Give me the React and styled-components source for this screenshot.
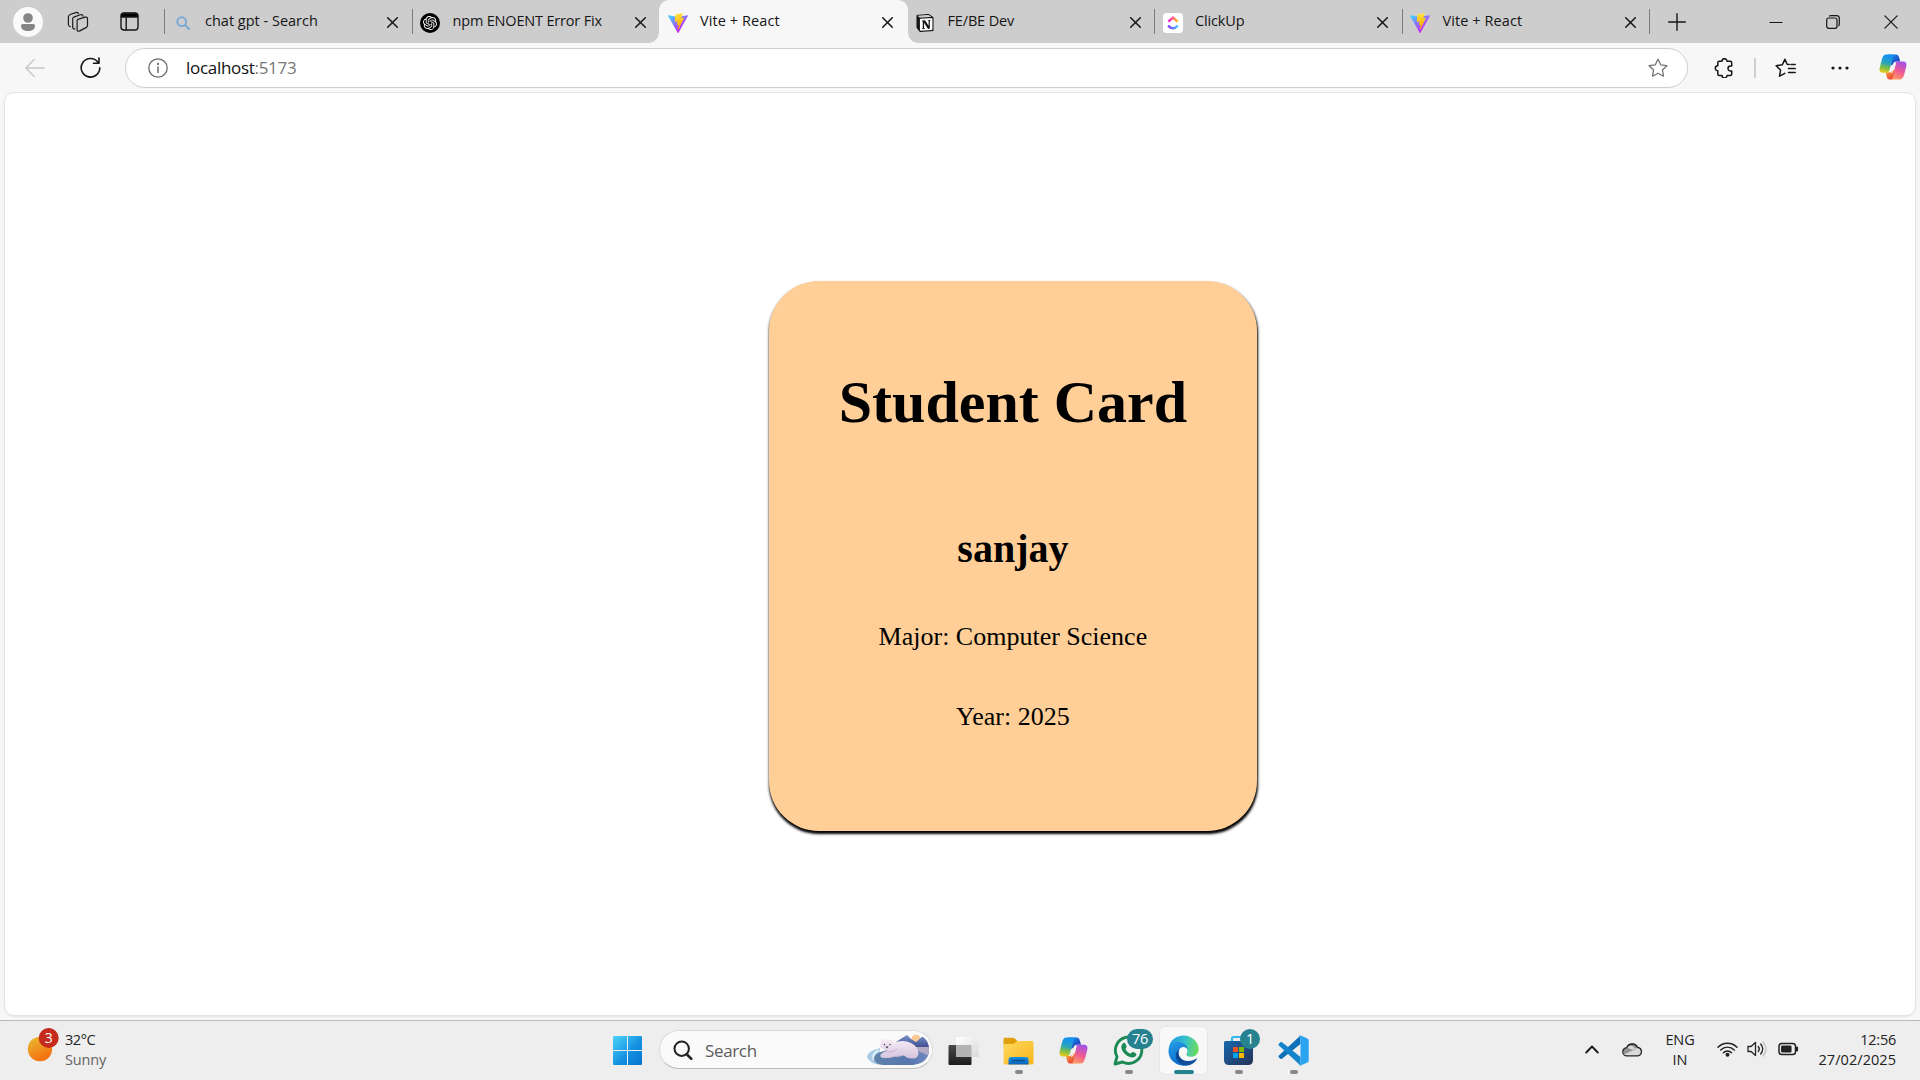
import React from "react";
import styled, { createGlobalStyle, css } from "styled-components";
import { SiOpenai, SiNotion } from "react-icons/si";

const GlobalStyle = createGlobalStyle`
  * { box-sizing: border-box; }
  body { margin: 0; background: #f7f7f7; overflow: hidden; }
  svg { display: block; flex: none; }
`;

const ui = css`
  font-family: "Open Sans", "Noto Sans", sans-serif;
  white-space: nowrap;
`;

const Screen = styled.div`
  width: 1920px;
  height: 1080px;
  display: flex;
  flex-direction: column;
  overflow: hidden;
  background: #f7f7f7;
`;

/* ---------- tab strip ---------- */
const TabStrip = styled.header`
  height: 43px;
  flex: none;
  display: flex;
  background: #cdcdcd;
`;

const Slot = styled.div`
  width: ${(p) => p.$w}px;
  height: 100%;
  padding-left: ${(p) => p.$pl || 0}px;
  flex: none;
  display: flex;
  align-items: center;
  justify-content: center;
`;

const Avatar = styled.div`
  width: 30px;
  height: 30px;
  border-radius: 50%;
  background: #fafafa;
  display: grid;
  place-items: center;
`;

const Divider = styled.i`
  width: 1px;
  height: 25px;
  flex: none;
  background: #7c7c7c;
  visibility: ${(p) => (p.$hidden ? "hidden" : "visible")};
`;

const TabItem = styled.div`
  ${ui}
  position: relative;
  width: 247.5px;
  height: 43px;
  flex: none;
  display: flex;
  align-items: center;
  font-size: 14.5px;
  color: #161616;
  ${(p) =>
    p.$active &&
    css`
      &::before {
        content: "";
        position: absolute;
        inset: 0 -1.5px 0 -0.5px;
        background: #f7f7f7;
        border-radius: 10px 10px 0 0;
      }
      &::after {
        content: "";
        position: absolute;
        left: -10.5px;
        right: -11.5px;
        bottom: 0;
        height: 10px;
        background: radial-gradient(circle at 0 0, transparent 9.5px, #f7f7f7 10px) left / 10px 10px no-repeat,
          radial-gradient(circle at 100% 0, transparent 9.5px, #f7f7f7 10px) right / 10px 10px no-repeat;
      }
    `}
  & > * { z-index: 1; }
`;

const Favicon = styled.div`
  width: 35px;
  flex: none;
  display: flex;
  justify-content: center;
  margin-top: 2px;
`;

const TabTitle = styled.span`
  flex: 1;
  padding-left: 5px;
  padding-bottom: 2px;
  letter-spacing: ${(p) => p.$ls}px;
`;

const TabClose = styled.div`
  width: 38px;
  flex: none;
  display: flex;
  justify-content: center;
  margin-top: 1px;
`;

const Spacer = styled.div`
  flex: 1;
`;

/* ---------- toolbar ---------- */
const Toolbar = styled.div`
  height: 49px;
  flex: none;
  display: flex;
  align-items: center;
  padding-left: 6px;
`;

const AddressBar = styled.div`
  ${ui}
  width: 1563px;
  height: 40px;
  margin: 1px 6px 0 7px;
  flex: none;
  display: flex;
  align-items: center;
  border: 1px solid #cfcfcf;
  border-radius: 20px;
  background: #fff;
  font-size: 17px;
  color: #111;
`;

const Url = styled.span`
  flex: 1;
  padding: 0 0 2px;
  letter-spacing: -0.3px;
  em { font-style: normal; color: #767676; }
`;

const ToolDivider = styled.i`
  width: 2px;
  height: 20px;
  flex: none;
  background: #cfcfcf;
`;

/* ---------- page ---------- */
const Viewport = styled.main`
  width: 1912px;
  height: 924px;
  margin: 0 0 0 4px;
  flex: none;
  border: 1px solid #e4e4e4;
  border-radius: 10px;
  background: #fff;
  padding: 188px 0 0 763.5px;
  box-shadow: 0 1px 2px rgba(0, 0, 0, 0.08);
`;

const Card = styled.section`
  width: 488.8px;
  height: 550px;
  border-radius: 50px;
  background: #ffcf97;
  box-shadow: 0.6px 2.5px 2.5px #000;
  display: flex;
  flex-direction: column;
  align-items: center;
  color: #000;
  font-family: "Liberation Serif", "Times New Roman", serif;
`;

const CardTitle = styled.h1`
  margin: 86px 0 0;
  font-size: 60px;
  line-height: 70px;
`;

const CardName = styled.h2`
  margin: 89px 0 0;
  font-size: 40px;
  line-height: 46px;
`;

const CardLine = styled.p`
  margin: ${(p) => p.$top}px 0 0;
  font-size: 26px;
  line-height: 30px;
`;

/* ---------- taskbar ---------- */
const Taskbar = styled.footer`
  ${ui}
  height: 60px;
  margin-top: auto;
  flex: none;
  display: flex;
  align-items: stretch;
  border-top: 1px solid #b9bbb9;
  background: #eeeeee;
  color: #222;
`;

const Weather = styled.div`
  width: 599px;
  flex: none;
  display: flex;
  padding: 7px 0 0 27px;
  gap: 5px;
`;

const WeatherText = styled.div`
  font-size: 14.5px;
  line-height: 20px;
  padding-top: 2px;
  letter-spacing: -0.45px;
  span { display: block; color: #646464; letter-spacing: -0.15px; }
`;

const SearchBox = styled.div`
  width: 274px;
  height: 39px;
  margin: 9px 3px 0 3px;
  flex: none;
  display: flex;
  align-items: center;
  padding: 0 2px 0 13px;
  border: 1px solid #dadada;
  border-bottom-color: #bdbdbd;
  border-radius: 20px;
  background: #fafafa;
  font-size: 17px;
  color: #5d5d5d;
  span { flex: 1; padding: 1px 0 0 12px; letter-spacing: -0.35px; }
`;

const AppButton = styled.div`
  position: relative;
  width: 49px;
  height: 49px;
  margin: 5px 3px 0;
  flex: none;
  display: flex;
  align-items: center;
  justify-content: center;
  border-radius: 6px;
  border: 1px solid ${(p) => (p.$active ? "#e6e6e6" : "transparent")};
  background: ${(p) => (p.$active ? "#f8f8f8" : "transparent")};
  ${(p) =>
    (p.$open || p.$active) &&
    css`
      &::after {
        content: "";
        position: absolute;
        bottom: 0;
        width: ${p.$active ? 20 : 8}px;
        height: 4px;
        border-radius: 2px;
        background: ${p.$active ? "#27828f" : "#878787"};
      }
    `}
`;

const Badge = styled.span`
  position: absolute;
  left: ${(p) => p.$left}px;
  top: 2px;
  min-width: 20px;
  height: 20px;
  padding: 0 5px;
  border-radius: 10px;
  background: #27828f;
  color: #fff;
  font-size: 14.5px;
  line-height: 20px;
  letter-spacing: -0.4px;
  text-align: center;
`;

const Tray = styled.div`
  display: flex;
  align-items: center;
  margin-left: auto;
  padding: 0 24px 3px 0;
`;

const TrayText = styled.div`
  width: ${(p) => p.$w}px;
  padding-top: 2px;
  text-align: ${(p) => p.$align};
  font-size: 14.5px;
  line-height: 20px;
  letter-spacing: ${(p) => p.$ls}px;
  span { letter-spacing: 0.05px; }
`;

/* ---------- icons ---------- */
const Line = ({ w = 20, h, box, c = "#161616", sw = 1.3, children }) => (
  <svg width={w} height={h || w} viewBox={box || `0 0 ${w} ${h || w}`} fill="none" stroke={c} strokeWidth={sw} strokeLinecap="round" strokeLinejoin="round">
    {children}
  </svg>
);

const PersonIcon = () => (
  <svg width="16" height="20" viewBox="0 0 16 20" fill="#858585">
    <circle cx="8" cy="6" r="4.8" />
    <path d="M2.5 12h11Q15 12 15 13.7C15 17.4 12 19 8 19S1 17.4 1 13.7Q1 12 2.500 12Z" />
  </svg>
);

const WorkspacesIcon = () => (
  <Line w={22} c="#1c1c1c" sw={1.2}>
    <path d="M10.800 8.300 18 6.200Q20.500 5.600 20.500 8v6.300q0 1.700-1.500 2.300l-6.200 3.300q-2.300 1-2.700-1.100V10q0-1.300.7-1.700Z" />
    <path d="M16 5.200q-.5-2-2.500-1.400L7.300 5.900Q5.700 6.500 5.700 8v8.300q.2 1.900 2.200 1.600" />
    <path d="M11.500 2.600q-1-1.600-2.800-1L3.200 3.500Q1.400 4.100 1.400 6v7.800q.2 1.600 1.900 1.800" />
  </Line>
);

const TabActionsIcon = () => (
  <Line w={19} c="#161616" sw={1.4}>
    <rect x="1" y="1" width="17" height="17" rx="3" />
    <path d="M1.500 5V3.500q0-2 2-2h12q2 0 2 2V5Z" fill="#000" />
    <path d="M6.200 6v12" />
  </Line>
);

const BlueSearchIcon = () => (
  <Line w={14} c="#78a9d6" sw={2}>
    <circle cx="5.700" cy="5.700" r="4.400" />
    <path d="m9 9 4 4" />
  </Line>
);

const CrossIcon = ({ s = 11, sw = 1.5 }) => (
  <Line w={s} box="0 0 11 11" c="#161616" sw={sw}>
    <path d="M.7.700 10.300 10.300M10.300.700.7 10.300" />
  </Line>
);

const OpenAiBadge = styled.div`
  width: 20px;
  height: 20px;
  border-radius: 50%;
  background: #000;
  color: #fff;
  display: grid;
  place-items: center;
`;

const NotionHalo = styled.div`
  display: grid;
  place-items: center;
  filter: drop-shadow(0 0 0.6px #fff) drop-shadow(0 0 0.6px #fff);
`;

const NotionPage = styled.div`
  display: grid;
  background: linear-gradient(#fff, #fff) 4px 5px / 12px 11px no-repeat;
`;

const ViteIcon = ({ id }) => (
  <svg width="20" height="20" viewBox="0 0 256 257">
    <defs>
      <linearGradient id={`${id}a`} x1="-.8%" x2="57.6%" y1="7.700%" y2="78.400%">
        <stop offset="0%" stopColor="#41D1FF" />
        <stop offset="100%" stopColor="#BD34FE" />
      </linearGradient>
      <linearGradient id={`${id}b`} x1="43.400%" x2="50.300%" y1="2.200%" y2="89%">
        <stop offset="0%" stopColor="#FFEA83" />
        <stop offset="8.300%" stopColor="#FFDD35" />
        <stop offset="100%" stopColor="#FFA800" />
      </linearGradient>
    </defs>
    <path fill={`url(#${id}a)`} d="M255.153 37.938L134.897 252.976c-2.483 4.440-8.862 4.466-11.382.048L.875 37.958c-2.746-4.814 1.371-10.646 6.827-9.670l120.385 21.517a6.537 6.537 0 0 0 2.322-.004l117.867-21.483c5.438-.991 9.574 4.796 6.877 9.620Z" />
    <path fill={`url(#${id}b)`} d="M185.432.063L96.440 17.501a3.268 3.268 0 0 0-2.634 3.014l-5.474 92.456a3.268 3.268 0 0 0 3.997 3.378l24.777-5.718c2.318-.535 4.413 1.507 3.936 3.838l-7.361 36.047c-.495 2.426 1.782 4.500 4.151 3.780l15.304-4.649c2.372-.720 4.652 1.360 4.150 3.788l-11.698 56.621c-.732 3.542 3.979 5.473 5.943 2.437l1.313-2.028l72.516-144.720c1.215-2.423-.880-5.186-3.540-4.672l-25.505 4.922c-2.396.462-4.435-1.770-3.759-4.114l16.646-57.705c.677-2.350-1.370-4.583-3.769-4.113Z" />
  </svg>
);

const ClickUpIcon = () => (
  <svg width="20" height="20" viewBox="0 0 20 20" fill="none" strokeWidth="2.500">
    <defs>
      <linearGradient id="cuTop" x1="5" x2="15" y1="0" y2="0" gradientUnits="userSpaceOnUse">
        <stop stopColor="#ff02f0" />
        <stop offset="1" stopColor="#ffc800" />
      </linearGradient>
      <linearGradient id="cuBot" x1="5" x2="15" y1="0" y2="0" gradientUnits="userSpaceOnUse">
        <stop stopColor="#8930fd" />
        <stop offset="1" stopColor="#49ccf9" />
      </linearGradient>
    </defs>
    <rect width="20" height="20" rx="3.500" fill="#fff" />
    <path d="m5.400 8.600 4.600-4 4.600 4" stroke="url(#cuTop)" />
    <path d="M5.200 12.700q4.800 5.200 9.600 0" stroke="url(#cuBot)" />
  </svg>
);

const CopilotIcon = ({ id, w = 29 }) => (
  <svg width={w} height={(w * 27) / 29} viewBox="0 0 29 27">
    <defs>
      <linearGradient id={`${id}l`} x1="10" y1="1" x2="6" y2="20" gradientUnits="userSpaceOnUse">
        <stop offset=".1" stopColor="#1592ed" />
        <stop offset=".45" stopColor="#2aa5b8" />
        <stop offset=".7" stopColor="#7bbd48" />
        <stop offset="1" stopColor="#f8cc14" />
      </linearGradient>
      <linearGradient id={`${id}r`} x1="24" y1="8" x2="16" y2="27" gradientUnits="userSpaceOnUse">
        <stop stopColor="#a252e8" />
        <stop offset=".5" stopColor="#ef5a93" />
        <stop offset="1" stopColor="#ffa35c" />
      </linearGradient>
      <linearGradient id={`${id}t`} x1="13" y1="0" x2="21" y2="8" gradientUnits="userSpaceOnUse">
        <stop stopColor="#1a8de8" />
        <stop offset="1" stopColor="#1e3fc0" />
      </linearGradient>
      <linearGradient id={`${id}b`} x1="8" y1="18" x2="14" y2="26" gradientUnits="userSpaceOnUse">
        <stop stopColor="#f9a032" />
        <stop offset="1" stopColor="#e83e3e" />
      </linearGradient>
    </defs>
    <path fill={`url(#${id}t)`} d="M9 .500h8.500c2 0 2.800 1.200 3.300 3l1.200 4.300h-4c-2 0-3 1-3.600 3L12 12Z" />
    <path fill={`url(#${id}b)`} d="M7 19h3.500c2 0 2.800-1.200 3.300-3l3.400 1-3 9.500H11c-2 0-2.600-1.300-3.100-3.200Z" />
    <path fill={`url(#${id}l)`} d="M7.500.500H17c-1.500.300-2 1.500-2.500 3.200L11 16c-.600 2.200-1.800 3.400-4 3.400H4c-3.300 0-4-2.400-3.200-5.400L3 5.500C4 2.200 5 .500 7.500.500Z" />
    <path fill={`url(#${id}r)`} d="M18 7.800h7c3.300 0 4 2.400 3.200 5.400L26 21.500c-1 3.300-2 5-4.500 5H12c1.500-.300 2-1.500 2.500-3.200L17 11.500c.300-2 .3-3.700 1-3.700Z" />
    <path fill="#f7f5f4" d="M15.500 9.500h2.300l-3.800 9.200c-.4.900-1 1.200-2.300 1.100 1-.800 1.400-1.800 1.700-3Z" />
  </svg>
);

const STAR = "m10 1.200 2.750 5.600 6.150.900-4.450 4.350 1.050 6.150L10 15.300l-5.500 2.900 1.050-6.150L1.100 7.700l6.150-.900Z";

const PuzzleIcon = () => (
  <Line w={20} c="#161616" sw={1.5}>
    <path d="M5.300 3.200H8a2.500 2.500 0 0 1 5 0h3.200q1.500 0 1.500 1.500V8H16.500a2.500 2.500 0 0 0 0 5h1.200v2.900q0 1.500-1.500 1.500H13a2.500 2.500 0 0 1-5 0H5.300q-1.500 0-1.500-1.500V12.800a2.500 2.500 0 0 1 0-5V4.700q0-1.500 1.500-1.500Z" />
  </Line>
);

const SunIcon = () => (
  <svg width="33" height="36" viewBox="0 0 33 36">
    <defs>
      <linearGradient id="sun" x1=".2" y1="0" x2=".7" y2="1">
        <stop stopColor="#e9b92e" />
        <stop offset="1" stopColor="#f5690f" />
      </linearGradient>
    </defs>
    <circle cx="13" cy="21" r="12.200" fill="url(#sun)" />
    <circle cx="21.700" cy="10" r="10" fill="#c42b1c" />
    <text x="21.700" y="15" textAnchor="middle" fill="#fff" fontSize="14" fontFamily="Open Sans, Noto Sans, sans-serif">3</text>
  </svg>
);

const WindowsIcon = () => (
  <svg width="29" height="29" viewBox="0 0 29 29" fill="url(#win)">
    <defs>
      <linearGradient id="win" x1="0" y1="0" x2="29" y2="29" gradientUnits="userSpaceOnUse">
        <stop stopColor="#4fd3fb" />
        <stop offset=".55" stopColor="#1593e0" />
        <stop offset="1" stopColor="#0573d0" />
      </linearGradient>
    </defs>
    <path d="M1 0h13v14H0V1Q0 0 1 0ZM15 0h13q1 0 1 1v13H15ZM0 15h14v14H1q-1 0-1-1ZM15 15h14v13q0 1-1 1H15Z" />
  </svg>
);

const BearIcon = () => (
  <svg width="64" height="31" viewBox="0 0 64 31">
    <defs>
      <linearGradient id="sea" x1="0" y1="0" x2="1" y2="0">
        <stop stopColor="#5f83ab" />
        <stop offset=".6" stopColor="#5776ad" />
        <stop offset="1" stopColor="#7389c2" />
      </linearGradient>
      <linearGradient id="hill" x1="0" y1="0" x2="0" y2="1">
        <stop stopColor="#7792c8" />
        <stop offset="1" stopColor="#414f93" />
      </linearGradient>
      <linearGradient id="fur" x1="0" y1="0" x2="0" y2="1">
        <stop stopColor="#f7edf6" />
        <stop offset="1" stopColor="#d5c3dd" />
      </linearGradient>
      <clipPath id="pill"><path d="M0 0h48Q63 2 63 15.500T47 31H0Z" /></clipPath>
    </defs>
    <g clipPath="url(#pill)">
      <path d="M14 14Q1 17 1 23q2 7 16 8h8L14 22Z" fill="#a9cbe6" />
      <path d="M13 16Q5 20 8 26" fill="none" stroke="#dcecf7" strokeWidth="2.500" />
      <path d="M32 12h32v19H17Q8 30 8 24q1-5 10-7Z" fill="url(#sea)" />
      <path d="M46 11h18v11l-10-4Z" fill="#b3a9c0" />
      <circle cx="50" cy="5" r="4.500" fill="#fbc996" />
      <path d="m30 8 6-4 5-3 4 4 5 3 7-6 7 7v4H36Z" fill="url(#hill)" />
      <path d="M27 9Q37 5 45 9q8 4 7.500 11-1 5-6.500 4.500-5 0-8-3-6 1.500-9 1-5 2-12 1.500-4-1-2-4 3-2.500 6-3.500-4-1-6-3-2-3 0-5-1-4 2-3 4-1 6 0 4-1 4 3Z" fill="url(#fur)" />
      <path d="M20 17.500q7 1.500 11-2.500M28 22.500q6 0 10-1.500" fill="none" stroke="#c3afcd" strokeWidth="1" />
      <path d="M19.500 12.500h3l-1.500 2Z" fill="#3d2e4b" />
      <circle cx="18.500" cy="10.500" r=".7" fill="#3d2e4b" />
      <circle cx="24" cy="10.500" r=".7" fill="#3d2e4b" />
    </g>
  </svg>
);

const TaskViewIcon = () => (
  <svg width="31" height="30" viewBox="0 0 31 30">
    <defs>
      <linearGradient id="tvd" x1="0" y1="0" x2="0" y2="1"><stop stopColor="#4b4b4b" /><stop offset="1" stopColor="#1c1c1c" /></linearGradient>
      <linearGradient id="tvl" x1="0" y1="0" x2="1" y2="1"><stop stopColor="#fff" /><stop offset="1" stopColor="#d9d9d9" /></linearGradient>
    </defs>
    <rect x=".5" y="9" width="23" height="20" rx="1" fill="url(#tvd)" />
    <rect x="8" y="1" width="22.500" height="20" rx="1" fill="url(#tvl)" />
    <path d="M8 9h15.500v12H9q-1 0-1-1Z" fill="#b3b3b3" />
  </svg>
);

const FolderIcon = () => (
  <svg width="31" height="28" viewBox="0 0 31 28">
    <defs>
      <linearGradient id="fold" x1="0" y1="0" x2="1" y2="1"><stop stopColor="#ffd95f" /><stop offset="1" stopColor="#f7b51d" /></linearGradient>
      <linearGradient id="fblue" x1="0" y1="0" x2="0" y2="1"><stop stopColor="#1191e4" /><stop offset="1" stopColor="#0e62b5" /></linearGradient>
    </defs>
    <path d="M.5 2q0-1.300 1.300-1.300h8.400q1 0 1.700.700L14.500 4v5H.5Z" fill="#e0a00c" />
    <path d="M.5 7q5 .2 9 0 1.700 0 3-1.500l1.300-1.500H29q1.500 0 1.500 1.500V26q0 1.500-1.500 1.500H2Q.5 27.500.500 26Z" fill="url(#fold)" />
    <path d="M5.500 27.500v-4.500q0-3 3-3h14q3 0 3 3v4.500Z" fill="url(#fblue)" />
    <path d="M9.500 23.500h12" stroke="#0b4f93" strokeWidth="1.300" strokeLinecap="round" />
  </svg>
);

const WhatsAppIcon = () => (
  <svg width="31" height="31" viewBox="0 0 31 31">
    <path d="M2 29 4 21.600A13.200 13.200 0 1 1 9.500 27Z" fill="#f2f2f2" stroke="#1c8a54" strokeWidth="2.900" strokeLinejoin="round" />
    <path d="M10 8.300c.7-.8 1.900-.7 2.300.2l1.200 2.800c.3.700 0 1.100-1.100 2.600 1.200 2.300 2.900 3.800 5.200 4.800 1.200-1.600 1.700-2 2.400-1.700l2.700 1.300c.9.500.9 1.300.4 2.300-1 1.800-3 2.400-5.400 1.700-4.300-1.200-7.700-4.500-9-8.300-.800-2.300-.2-4.300 1.300-5.700Z" fill="#1c8a54" />
  </svg>
);

const EdgeIcon = () => (
  <svg width="31" height="31" viewBox="0 0 31 31">
    <defs>
      <linearGradient id="eg" x1="2" y1="9" x2="30" y2="14" gradientUnits="userSpaceOnUse">
        <stop stopColor="#219ce0" /><stop offset=".5" stopColor="#35c1cc" /><stop offset="1" stopColor="#6ddd5a" />
      </linearGradient>
      <linearGradient id="eb" x1="4" y1="10" x2="14" y2="31" gradientUnits="userSpaceOnUse">
        <stop stopColor="#2393e2" /><stop offset="1" stopColor="#0669cb" />
      </linearGradient>
      <linearGradient id="ed" x1="10" y1="18" x2="28" y2="27" gradientUnits="userSpaceOnUse">
        <stop stopColor="#0c4895" /><stop offset="1" stopColor="#12569e" />
      </linearGradient>
    </defs>
    <path d="M.700 13.500C1.700 5.500 8 .500 15.500.500 24 .500 30.700 7 30.700 14c0 5-3.700 7.800-7.700 7.800-3.600 0-5.500-1.400-4.500-3.200 2.200-3.200.2-6.900-3.500-6.900-5 0-13-2-14.300 1.800Z" fill="url(#eg)" />
    <path d="M.500 15C1.300 9 6 6.600 10.500 6.900c5.200.2 9.300 3.400 9 7.600-3.700-5.300-9.700-1.300-9.200 4.300.3 5.400 4.700 9.600 10.300 11-2.800 1-6 1.200-8.800.300C4.500 28 0 22 .500 15Z" fill="url(#eb)" />
    <path d="M11.500 14.500C8.500 20 13.500 26.600 20.500 26c3.300-.1 5.700-1.300 7.500-2.300.6-.3 1 .2.700.7-2.300 3.500-5.700 6-9.500 6.100-6.500-.2-11.700-4.700-11.400-10.300.1-2.500 1.500-4.500 3.700-5.700Z" fill="url(#ed)" />
    <path d="M11.500 15.500c2-4 6.300-4 7.600-.8.700 2-.8 3.200-1 4.600 0 1 .7 2 2 2.500-5.600 1-9.800-1.700-8.600-6.300Z" fill="#f8f8f8" />
  </svg>
);

const StoreIcon = () => (
  <svg width="31" height="31" viewBox="0 0 31 31">
    <defs>
      <linearGradient id="st" x1="0" y1="0" x2="1" y2="1"><stop stopColor="#1768ad" /><stop offset="1" stopColor="#263257" /></linearGradient>
    </defs>
    <path d="M9 7V3.500Q9 2 10.500 2h10Q22 2 22 3.500V7" fill="none" stroke="#32b7ee" strokeWidth="2.200" />
    <path d="M1 7.500Q1 6 2.500 6h26Q30 6 30 7.500V25q0 5-5 5H6q-5 0-5-5Z" fill="url(#st)" />
    <path d="M10 12h5v5h-5Z" fill="#f25022" /><path d="M16 12h5v5h-5Z" fill="#7fba00" />
    <path d="M10 18h5v5h-5Z" fill="#00a4ef" /><path d="M16 18h5v5h-5Z" fill="#ffb900" />
  </svg>
);

const CodeIcon = () => (
  <svg width="31" height="31" viewBox="0 0 31 31">
    <path d="M22.500 9 4 23.700q-.8.600-1.600 0L.9 22.300q-.9-.9 0-1.800L22.500.500Z" fill="#0e70b8" />
    <path d="M22.500 22 4 7.300q-.8-.6-1.600 0L.9 8.700q-.9.900 0 1.800L22.500 30.500Z" fill="#1383cb" />
    <path d="m22.800.500 7 3.300q.9.500.9 1.500v20.400q0 1-.9 1.500l-7 3.300q-1.200.4-2-.5 1.700.5 1.700-1.500v-26q0-2-1.700-1.500.8-.9 2-.5Z" fill="#2ba5f2" />
  </svg>
);

const CloudIcon = () => (
  <svg width="21" height="15" viewBox="0 0 21 15">
    <path d="M5 13.800a4 4 0 0 1-.3-8.100A6 6 0 0 1 15.700 5.500 4.200 4.200 0 0 1 16 13.800Z" fill="#d9d9d9" />
    <path d="M2.500 12.300 14 6.800 10 4Q7 3 4.700 5.700-.5 7 2.500 12.300ZM4.700 5.700Q8-.8 13 2l2.700 3.500-5 2.300Z" fill="#929292" />
    <path d="M5 13.800a4 4 0 0 1-.3-8.100A6 6 0 0 1 15.700 5.500 4.200 4.200 0 0 1 16 13.800Z" fill="none" stroke="#222" strokeWidth="1.300" />
  </svg>
);

const TABS = [
  { title: "chat gpt - Search", icon: <BlueSearchIcon />, ls: 0, divider: true },
  { title: "npm ENOENT Error Fix", icon: <OpenAiBadge><SiOpenai size={14} /></OpenAiBadge>, ls: -0.18, divider: true },
  { title: "Vite + React", icon: <ViteIcon id="v1" />, ls: 0.08, active: true },
  { title: "FE/BE Dev", icon: <NotionHalo><NotionPage><SiNotion size={18} /></NotionPage></NotionHalo>, ls: -0.15 },
  { title: "ClickUp", icon: <ClickUpIcon />, ls: -0.15, divider: true },
  { title: "Vite + React", icon: <ViteIcon id="v2" />, ls: 0.08, divider: true },
];

function Tabs() {
  return (
    <TabStrip>
      <Slot $w={56}><Avatar><PersonIcon /></Avatar></Slot>
      <Slot $w={43}><WorkspacesIcon /></Slot>
      <Slot $w={61}><TabActionsIcon /></Slot>
      <Slot $w={4} />
      {TABS.map((t, i) => (
        <TabItem key={i} $active={t.active}>
          <Divider $hidden={!t.divider} />
          <Favicon>{t.icon}</Favicon>
          <TabTitle $ls={t.ls}>{t.title}</TabTitle>
          <TabClose><CrossIcon /></TabClose>
        </TabItem>
      ))}
      <Slot $w={1}><Divider /></Slot>
      <Slot $w={54}><Line w={18} sw={1.4}><path d="M9 .7v16.600M.7 9h16.600" /></Line></Slot>
      <Spacer />
      <Slot $w={57}><Line w={14} sw={1.2}><path d="M1 7.500h12" /></Line></Slot>
      <Slot $w={58}>
        <Line w={14} sw={1.2}>
          <rect x=".7" y="3" width="10.300" height="10.300" rx="2" />
          <path d="M3.500 1Q4 .7 5 .7h5.500q2.800 0 2.800 2.800V9q0 1-.5 1.700" />
        </Line>
      </Slot>
      <Slot $w={58}><CrossIcon s={14} sw={0.95} /></Slot>
    </TabStrip>
  );
}

function Navigation() {
  return (
    <Toolbar>
      <Slot $w={57}><Line w={20} c="#c6c6c6"><path d="M19.300 10H.8M9.300 1.500.8 10l8.500 8.500" /></Line></Slot>
      <Slot $w={55}>
        <Line w={21} c="#161616" sw={1.6}>
          <path d="M19.800 10.800A9.300 9.300 0 1 1 17.800 5M19 1v5.300h-5.500" />
        </Line>
      </Slot>
      <AddressBar>
        <Slot $w={60} $pl={3}>
          <Line w={20} c="#6b6b6b">
            <circle cx="10" cy="10" r="9.200" />
            <path d="M10 9v5.500" strokeWidth="1.500" />
            <circle cx="10" cy="6" r=".5" fill="#6b6b6b" />
          </Line>
        </Slot>
        <Url>localhost<em>:5173</em></Url>
        <Slot $w={59}><Line w={20} c="#737373"><path d={STAR} /></Line></Slot>
      </AddressBar>
      <Slot $w={60}><PuzzleIcon /></Slot>
      <ToolDivider />
      <Slot $w={59}>
        <Line w={21} h={20} c="#161616" sw={1.5}>
          <path d="m14.300 6.500-2.200-.3L10 1.200 7.250 6.800 1.100 7.700l4.450 4.350L4.500 18.200l5.300-2.800M13.500 10.500h6.700M13.500 14.500h6.700M16 6.500h4.200" />
        </Line>
      </Slot>
      <Slot $w={49}>
        <svg width="18" height="4" viewBox="0 0 18 4" fill="#161616">
          <circle cx="2" cy="2" r="1.600" /><circle cx="9" cy="2" r="1.600" /><circle cx="16" cy="2" r="1.600" />
        </svg>
      </Slot>
      <Slot $w={56} $pl={2}><CopilotIcon id="c1" w={28} /></Slot>
    </Toolbar>
  );
}

function StudentCard() {
  return (
    <Card>
      <CardTitle>Student Card</CardTitle>
      <CardName>sanjay</CardName>
      <CardLine $top={50}>Major: Computer Science</CardLine>
      <CardLine $top={50}>Year: 2025</CardLine>
    </Card>
  );
}

function SystemBar() {
  return (
    <Taskbar>
      <Weather>
        <SunIcon />
        <WeatherText>32°C<span>Sunny</span></WeatherText>
      </Weather>
      <Slot $w={57}><WindowsIcon /></Slot>
      <SearchBox>
        <Line w={20} c="#222" sw={2}><circle cx="8.700" cy="8.700" r="7.200" /><path d="m14 14.500 4.300 4.300" strokeWidth="2.600" /></Line>
        <span>Search</span>
        <BearIcon />
      </SearchBox>
      <AppButton><TaskViewIcon /></AppButton>
      <AppButton $open><FolderIcon /></AppButton>
      <AppButton><CopilotIcon id="c2" w={29} /></AppButton>
      <AppButton $open><WhatsAppIcon /><Badge $left={22}>76</Badge></AppButton>
      <AppButton $active><EdgeIcon /></AppButton>
      <AppButton $open><StoreIcon /><Badge $left={25}>1</Badge></AppButton>
      <AppButton $open><CodeIcon /></AppButton>
      <Tray>
        <Slot $w={36}><Line w={14} h={9} sw={1.8}><path d="m1.200 7.500 5.800-6 5.800 6" /></Line></Slot>
        <Slot $w={44}><CloudIcon /></Slot>
        <TrayText $w={52} $align="center" $ls={-0.1}>ENG<br />IN</TrayText>
        <Slot $w={42}>
          <Line w={21} h={16} c="#222" sw={1.4}>
            <path d="M1 6.200a13.300 13.300 0 0 1 19 0M3.700 9a9.500 9.500 0 0 1 13.600 0M6.400 11.700a5.700 5.700 0 0 1 8.200 0" />
            <circle cx="10.500" cy="13.700" r="1.300" fill="#222" />
          </Line>
        </Slot>
        <Slot $w={18}>
          <Line w={20} h={16} c="#222">
            <path d="M1 5.500h3L8.500 1.500v13L4 10.500H1Z" />
            <path d="M11.300 5.500q2 2.500 0 5M13.700 3q4 5 0 10" />
            <path d="M16 1q6 7 0 14" stroke="#c2c2c2" />
          </Line>
        </Slot>
        <Slot $w={44}>
          <Line w={21} h={14} c="#222" sw={1.5}>
            <rect x="1" y="1.500" width="16.500" height="11" rx="2.800" />
            <rect x="3.800" y="4.200" width="9" height="5.600" rx=".6" fill="#222" />
            <path d="M19 5.500v3" strokeWidth="2.200" />
          </Line>
        </Slot>
        <TrayText $w={86} $align="right" $ls={-0.25}>12:56<br /><span>27/02/2025</span></TrayText>
      </Tray>
    </Taskbar>
  );
}

export default function App() {
  return (
    <Screen>
      <GlobalStyle />
      <Tabs />
      <Navigation />
      <Viewport>
        <StudentCard />
      </Viewport>
      <SystemBar />
    </Screen>
  );
}
